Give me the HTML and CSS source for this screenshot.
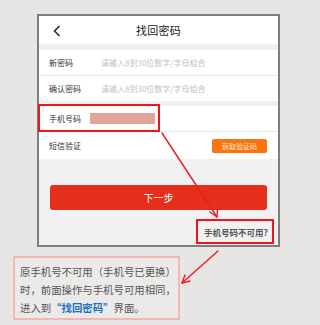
FILE: index.html
```html
<!DOCTYPE html>
<html lang="zh">
<head>
<meta charset="utf-8">
<link rel="stylesheet" href="styles.css">
</head>
<body>
<div class="page">
  <div class="phone">
    <div class="header">
      <svg class="back" width="10" height="12" viewBox="0 0 10 12"><path d="M7.5 1 L2.5 6 L7.5 11" fill="none" stroke="#222" stroke-width="1.5"/></svg>
      <span class="title">找回密码</span>
    </div>
    <div class="gap gap-a"></div>
    <div class="row row-1"><span class="label">新密码</span><span class="ph">请输入8到30位数字/字母组合</span></div>
    <div class="row row-2"><span class="label">确认密码</span><span class="ph">请输入8到30位数字/字母组合</span></div>
    <div class="gap gap-b"></div>
    <div class="row row-3"><span class="label">手机号码</span><span class="mask"></span></div>
    <div class="row row-4"><span class="label">短信验证</span><span class="code-btn">获取验证码</span></div>
    <div class="bottom">
      <div class="next">下一步</div>
      <div class="unavail"><span class="unavail-box">手机号码不可用?</span></div>
    </div>
    <div class="hl-phone"></div>
  </div>
  <div class="note">原手机号不可用（手机号已更换）<br>时，前面操作与手机号可用相同，<br>进入到<span class="link">“找回密码”</span>界面。</div>
  <svg class="arrows" width="320" height="325" viewBox="0 0 320 325">
    <g stroke="#ee1c1c" stroke-width="1.4" fill="none" stroke-linecap="round">
      <path d="M162 133 L217 217"/>
      <path d="M217 217 L210 212 M217 217 L217.5 208.5"/>
      <path d="M218 251 L182 283"/>
      <path d="M182 283 L185 275 M182 283 L190 281"/>
    </g>
  </svg>
</div>
</body>
</html>
```

FILE: styles.css
```css
* { box-sizing: border-box; margin: 0; padding: 0; }
html, body { width: 320px; height: 325px; overflow: hidden; }
body {
  background: #e7e6e4;
  font-family: "Noto Sans CJK SC", "Noto Sans", sans-serif;
  color: #333;
}
.page { position: relative; width: 320px; height: 325px; padding-top: 14px; }
.phone {
  position: relative;
  margin-left: 37px;
  width: 243px;
  height: 233px;
  border: 2px solid #7e7e7e;
  background: #f1f1f3;
  display: flex;
  flex-direction: column;
}
.header {
  height: 28px;
  background: #fff;
  display: flex;
  align-items: center;
  justify-content: center;
  position: relative;
}
.back { position: absolute; left: 13px; top: 9px; }
.title { font-size: 11px; color: #222; letter-spacing: 0.3px; }
.gap-a { height: 6px; }
.gap-b { height: 5px; }
.row {
  background: #fff;
  display: flex;
  align-items: center;
  padding-left: 10px;
  padding-right: 11px;
}
.row-1 { height: 26px; border-bottom: 1px solid #ececec; }
.row-2 { height: 25px; }
.row-3 { height: 26px; border-bottom: 1px solid #ececec; }
.row-4 { height: 27px; justify-content: space-between; }
.label { font-size: 8px; color: #333; width: 52px; }
.row-3 .label { width: 41px; }
.ph { font-size: 8px; color: #c2c2c2; }
.mask { width: 65px; height: 11px; background: #e0a699; }
.code-btn {
  width: 55px;
  height: 14px;
  border-radius: 2px;
  background: #fb7410;
  color: #fde8d6;
  font-size: 7px;
  display: flex;
  align-items: center;
  justify-content: center;
}
.bottom { flex: 1; display: flex; flex-direction: column; padding-top: 26px; }
.next {
  margin: 0 11px;
  height: 25px;
  border-radius: 3px;
  background: #e52f1a;
  color: #fff;
  font-size: 10px;
  display: flex;
  align-items: center;
  justify-content: center;
}
.unavail { display: flex; justify-content: flex-end; padding-right: 4px; margin-top: 9px; }
.unavail-box {
  width: 78px;
  height: 25px;
  border: 2px solid #f0141c;
  font-size: 8.5px;
  font-weight: bold;
  color: #555;
  display: flex;
  align-items: center;
  justify-content: center;
  padding-left: 2px;
}
.hl-phone {
  position: absolute;
  left: -1px;
  top: 88px;
  width: 122px;
  height: 28px;
  border: 2px solid #f0141c;
}
.note {
  margin-top: 9px;
  margin-left: 13px;
  width: 167px;
  height: 64px;
  border: 2px solid #f2b6b4;
  background: #ebeae8;
  font-size: 10.4px;
  line-height: 18px;
  color: #555;
  padding: 5px 0 0 5px;
  white-space: nowrap;
}
.link { color: #1b72c4; font-weight: bold; }
.arrows { position: absolute; left: 0; top: 0; pointer-events: none; }
```
